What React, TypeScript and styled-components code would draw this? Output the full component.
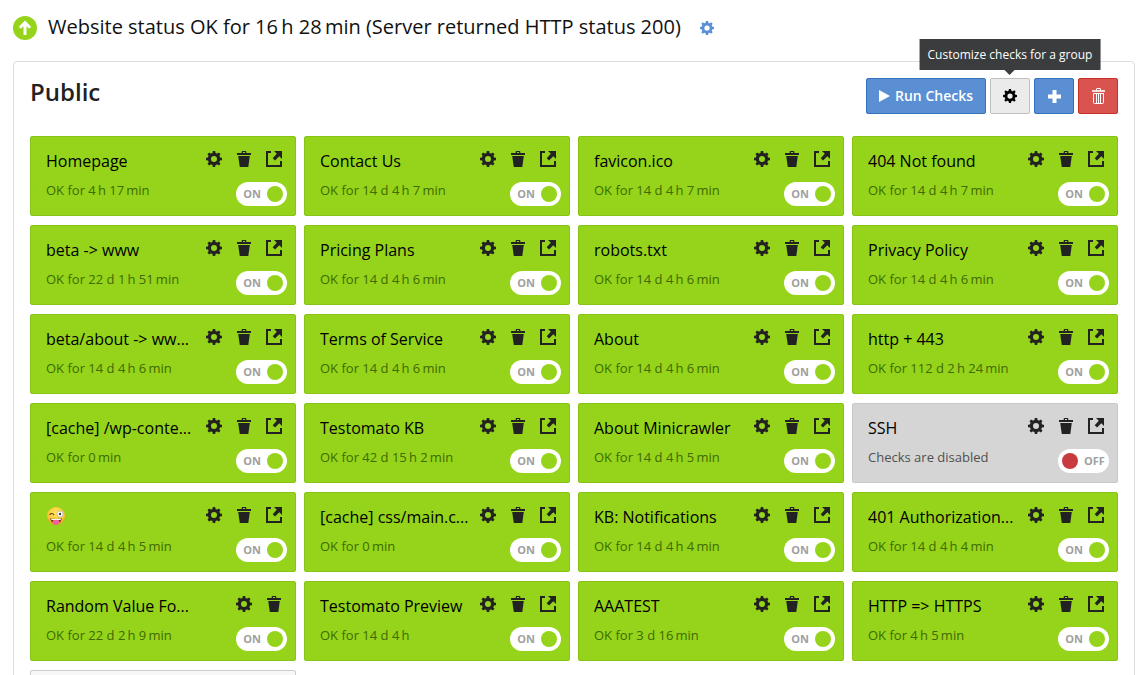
import React, { useState } from "react";
import styled, { createGlobalStyle } from "styled-components";

const GlobalStyle = createGlobalStyle`
  *, *::before, *::after { box-sizing: border-box; }
  body {
    margin: 0;
    background: #fff;
    color: #222;
    font-family: "Open Sans", "Noto Sans", sans-serif;
  }
`;

const Page = styled.main`
  height: 100vh;
  overflow-y: auto;
  scrollbar-width: none;
  padding: 12px 10px 16px 13px;
`;

const StatusBar = styled.header`
  display: flex;
  align-items: center;
  height: 32px;
  gap: 11px;
  margin-bottom: 17px;
`;

const StatusTitle = styled.h1`
  margin: 0;
  padding-bottom: 2px;
  font-size: 20px;
  line-height: 30px;
  font-weight: 400;
  color: #111;
  white-space: nowrap;
`;

const SettingsLink = styled.a`
  display: flex;
  margin-left: 8px;
  color: #5b8fd3;
`;

const Panel = styled.section`
  border: 1px solid #ddd;
  border-radius: 4px;
  padding: 16px;
`;

const PanelHeader = styled.div`
  display: flex;
  justify-content: space-between;
  align-items: flex-start;
  margin-bottom: 22px;
`;

const GroupName = styled.h2`
  margin: 0;
  font-size: 24px;
  line-height: 28px;
  font-weight: 600;
`;

const ButtonRow = styled.div`
  display: flex;
  gap: 4px;
`;

const tones = {
  blue: { bg: "#5b8fd3", border: "#3472c0", ink: "#fff" },
  grey: { bg: "#ebebeb", border: "#bfbfbf", ink: "#000" },
  red: { bg: "#d9534f", border: "#c9302c", ink: "#fff" },
};

const ToolButton = styled.button<{ $tone: keyof typeof tones }>`
  display: inline-flex;
  align-items: center;
  justify-content: center;
  gap: 5px;
  min-width: 40px;
  height: 36px;
  padding: 0 12px;
  border: 1px solid ${(p) => tones[p.$tone].border};
  border-radius: 2px;
  background: ${(p) => tones[p.$tone].bg};
  color: ${(p) => tones[p.$tone].ink};
  font: 650 14px/20px "Open Sans", "Noto Sans", sans-serif;
  white-space: nowrap;
  cursor: pointer;
`;

const TooltipAnchor = styled.div`
  position: relative;
`;

const Tooltip = styled.div`
  position: absolute;
  bottom: calc(100% + 8px);
  left: 50%;
  transform: translateX(-50%);
  padding: 7px 8px 6px;
  background: #3a3c3e;
  color: #fff;
  font-size: 12px;
  line-height: 18px;
  font-weight: 500;
  white-space: nowrap;

  &::after {
    content: "";
    position: absolute;
    top: 100%;
    left: 50%;
    margin-left: -5px;
    border: 5px solid transparent;
    border-bottom: 0;
    border-top-color: #3a3c3e;
  }
`;

const Grid = styled.div`
  display: grid;
  grid-template-columns: repeat(4, minmax(0, 1fr));
  gap: 9px 8px;
`;

const Card = styled.article<{ $off?: boolean }>`
  height: 80px;
  padding: 13px 13px 0 15px;
  border: 1px solid ${(p) => (p.$off ? "#c8c8c8" : "#87c415")};
  border-radius: 2px;
  background: ${(p) => (p.$off ? "#d5d5d5" : "#95d41a")};
`;

const EmptyCard = styled.div`
  height: 80px;
  border: 1px solid #ccc;
  border-radius: 2px;
  background: #f7f7f7;
`;

const CardTop = styled.div`
  display: grid;
  grid-template-columns: minmax(0, 1fr) 76px;
  column-gap: 8px;
  height: 30px;
`;

const CardTitle = styled.h3`
  margin: 0;
  font-size: 16px;
  line-height: 22px;
  font-weight: 400;
  color: #000;
  white-space: nowrap;
  overflow: hidden;
  text-overflow: ellipsis;
`;

const Actions = styled.div`
  display: flex;
  justify-content: flex-end;
  gap: 14px;
  padding-top: 1px;
`;

const IconButton = styled.button`
  display: block;
  width: 16px;
  height: 16px;
  padding: 0;
  border: 0;
  background: none;
  color: #222;
  cursor: pointer;
`;

const IconLink = styled.a`
  display: block;
  width: 16px;
  height: 16px;
  color: #222;
`;

const CardBottom = styled.div`
  display: flex;
  justify-content: space-between;
  align-items: flex-start;
  margin-right: -5px;
`;

const CardStatus = styled.p<{ $off?: boolean }>`
  margin: 0;
  font-size: 13px;
  line-height: 20px;
  color: ${(p) => (p.$off ? "#505050" : "#3f6a00")};
  white-space: nowrap;
`;

const Switch = styled.label<{ $on: boolean }>`
  display: flex;
  flex-direction: ${(p) => (p.$on ? "row-reverse" : "row")};
  align-items: center;
  gap: 6px;
  width: 51px;
  height: 24px;
  margin-top: 2px;
  padding: 0 4px;
  border-radius: 12px;
  background: #fff;
  color: #a0a0a0;
  font-size: 11px;
  line-height: 16px;
  font-weight: 700;
  cursor: pointer;
`;

const Knob = styled.input`
  appearance: none;
  width: 16px;
  height: 16px;
  margin: 0;
  border-radius: 50%;
  background: #c93a3f;
  cursor: pointer;

  &:checked {
    background: #95d41a;
  }
`;

function Gear({ size = 16 }: { size?: number }) {
  return (
    <svg width={size} height={size} viewBox="0 0 16 16" fill="currentColor" display="block" aria-hidden="true">
      <circle cx="8" cy="8" r="4.6" fill="none" stroke="currentColor" strokeWidth="3.2" />
      {[0, 45, 90, 135].map((angle) => (
        <g key={angle} transform={`rotate(${angle} 8 8)`}>
          <path d="M6.400 2.600 6.800 0h2.400l.4 2.600zM6.400 13.400 6.800 16h2.400l.4-2.600z" />
        </g>
      ))}
    </svg>
  );
}

function Trash() {
  return (
    <svg width="16" height="16" viewBox="0 0 16 16" fill="currentColor" display="block" aria-hidden="true">
      <path d="M1 2h4.700V.8Q5.700 0 6.500 0h3q.8 0 .8.8V2H15v2H1zM7 1.100V2h2v-.9z" fillRule="evenodd" />
      <path d="M2.200 5h11.600l-1.500 11H3.800z" />
    </svg>
  );
}

function External() {
  return (
    <svg width="16" height="16" viewBox="0 0 16 16" fill="currentColor" display="block" aria-hidden="true">
      <path d="M0 0h5v2H2v12h12v-4h2v6H0z" />
      <path d="M8 0h8v8l-2.700-2.700L9 9.500 6.700 7.200 10.800 2.800z" />
    </svg>
  );
}

function TrashOutline() {
  return (
    <svg width="13" height="16" viewBox="0 0 13 16" fill="none" stroke="currentColor" display="block" aria-hidden="true">
      <path d="M0 3h13" strokeWidth="1.600" />
      <path d="M4.500 3V1q0-.5.5-.5h3q.5 0 .5.5v2M1.500 5.500h10v9q0 1-1 1h-8q-1 0-1-1zM4.500 6v9M6.500 6v9M8.500 6v9" />
    </svg>
  );
}

function UpBadge() {
  return (
    <svg width="24" height="24" viewBox="0 0 24 24" display="block" role="img" aria-label="Up">
      <circle cx="12" cy="12" r="12" fill="#95d41a" />
      <path d="M12 19V7M6.800 11.800 12 6.600l5.200 5.200" fill="none" stroke="#fff" strokeWidth="3" />
    </svg>
  );
}

function WinkFace() {
  return (
    <svg width="20" height="20" viewBox="0 0 20 20" display="block" role="img" aria-label="Winking face with tongue">
      <defs>
        <radialGradient id="skin" cx="50%" cy="35%" r="65%">
          <stop offset="0" stopColor="#ffe95e" />
          <stop offset=".7" stopColor="#fcc73a" />
          <stop offset="1" stopColor="#e8912a" />
        </radialGradient>
      </defs>
      <circle cx="10" cy="10" r="9" fill="url(#skin)" />
      <path d="M3.500 8.800Q6 6.200 8 8.800" fill="none" stroke="#6b3e12" strokeWidth="1.200" />
      <circle cx="14" cy="8" r="3.100" fill="#fff" stroke="#9aa0a4" strokeWidth=".6" />
      <circle cx="14" cy="8" r="1.200" fill="#4b3a2a" />
      <path d="M4 12.200q6 1.600 12 0-.8 5-6 5t-6-5z" fill="#7c3418" />
      <path d="M4.700 12.500q5.300 1.200 10.600 0l-.6 1.300q-4.700 1-9.400 0z" fill="#fff" />
      <path d="M7 14.200q3-1 6 0v2.300q0 2.500-3 2.500t-3-2.500z" fill="#f0609a" />
    </svg>
  );
}

// Hours and minutes sit a thin space after their number.
const withThinSpaces = (text: string) => text.replace(/(\d) (h|min)\b/g, "$1\u2009$2");

interface Check {
  name: string;
  status: string;
  emoji?: boolean;
  off?: boolean;
  noLink?: boolean;
}

const checks: Check[] = [
  { name: "Homepage", status: "OK for 4 h 17 min" },
  { name: "Contact Us", status: "OK for 14 d 4 h 7 min" },
  { name: "favicon.ico", status: "OK for 14 d 4 h 7 min" },
  { name: "404 Not found", status: "OK for 14 d 4 h 7 min" },
  { name: "beta -> www", status: "OK for 22 d 1 h 51 min" },
  { name: "Pricing Plans", status: "OK for 14 d 4 h 6 min" },
  { name: "robots.txt", status: "OK for 14 d 4 h 6 min" },
  { name: "Privacy Policy", status: "OK for 14 d 4 h 6 min" },
  { name: "beta/about -> ww...", status: "OK for 14 d 4 h 6 min" },
  { name: "Terms of Service", status: "OK for 14 d 4 h 6 min" },
  { name: "About", status: "OK for 14 d 4 h 6 min" },
  { name: "http + 443", status: "OK for 112 d 2 h 24 min" },
  { name: "[cache] /wp-conte...", status: "OK for 0 min" },
  { name: "Testomato KB", status: "OK for 42 d 15 h 2 min" },
  { name: "About Minicrawler", status: "OK for 14 d 4 h 5 min" },
  { name: "SSH", status: "Checks are disabled", off: true },
  { name: "Wink", emoji: true, status: "OK for 14 d 4 h 5 min" },
  { name: "[cache] css/main.c...", status: "OK for 0 min" },
  { name: "KB: Notifications", status: "OK for 14 d 4 h 4 min" },
  { name: "401 Authorization...", status: "OK for 14 d 4 h 4 min" },
  { name: "Random Value Fo...", status: "OK for 22 d 2 h 9 min", noLink: true },
  { name: "Testomato Preview", status: "OK for 14 d 4 h" },
  { name: "AAATEST", status: "OK for 3 d 16 min" },
  { name: "HTTP => HTTPS", status: "OK for 4 h 5 min" },
];

function CheckCard({ check }: { check: Check }) {
  const [on, setOn] = useState(!check.off);
  return (
    <Card $off={!on}>
      <CardTop>
        <CardTitle>{check.emoji ? <WinkFace /> : check.name}</CardTitle>
        <Actions>
          <IconButton type="button" aria-label={`Settings for ${check.name}`}>
            <Gear />
          </IconButton>
          <IconButton type="button" aria-label={`Delete ${check.name}`}>
            <Trash />
          </IconButton>
          {!check.noLink && (
            <IconLink href="#" aria-label={`Open ${check.name}`}>
              <External />
            </IconLink>
          )}
        </Actions>
      </CardTop>
      <CardBottom>
        <CardStatus $off={!on}>{withThinSpaces(check.status)}</CardStatus>
        <Switch $on={on}>
          <Knob type="checkbox" checked={on} onChange={(e) => setOn(e.target.checked)} />
          <span>{on ? "ON" : "OFF"}</span>
        </Switch>
      </CardBottom>
    </Card>
  );
}

export default function App() {
  return (
    <>
      <GlobalStyle />
      <Page>
        <StatusBar>
          <UpBadge />
          <StatusTitle>
            {withThinSpaces("Website status OK for 16 h 28 min (Server returned HTTP status 200)")}
          </StatusTitle>
          <SettingsLink href="#" aria-label="Website settings">
            <Gear size={14} />
          </SettingsLink>
        </StatusBar>
        <Panel>
          <PanelHeader>
            <GroupName>Public</GroupName>
            <ButtonRow>
              <ToolButton type="button" $tone="blue">
                <svg width="11" height="12" viewBox="0 0 11 12" fill="currentColor" aria-hidden="true">
                  <path d="M0 0l11 6-11 6z" />
                </svg>
                Run Checks
              </ToolButton>
              <TooltipAnchor>
                <ToolButton type="button" $tone="grey" aria-label="Customize" aria-describedby="group-tip">
                  <Gear size={14} />
                </ToolButton>
                <Tooltip role="tooltip" id="group-tip">
                  Customize checks for a group
                </Tooltip>
              </TooltipAnchor>
              <ToolButton type="button" $tone="blue" aria-label="Add check">
                <svg width="13" height="13" viewBox="0 0 13 13" fill="currentColor" aria-hidden="true">
                  <path d="M4.500 0h4v4.500H13v4H8.500V13h-4V8.500H0v-4h4.500z" />
                </svg>
              </ToolButton>
              <ToolButton type="button" $tone="red" aria-label="Delete group">
                <TrashOutline />
              </ToolButton>
            </ButtonRow>
          </PanelHeader>
          <Grid>
            {checks.map((check) => (
              <CheckCard key={check.name} check={check} />
            ))}
            <EmptyCard />
          </Grid>
        </Panel>
      </Page>
    </>
  );
}
